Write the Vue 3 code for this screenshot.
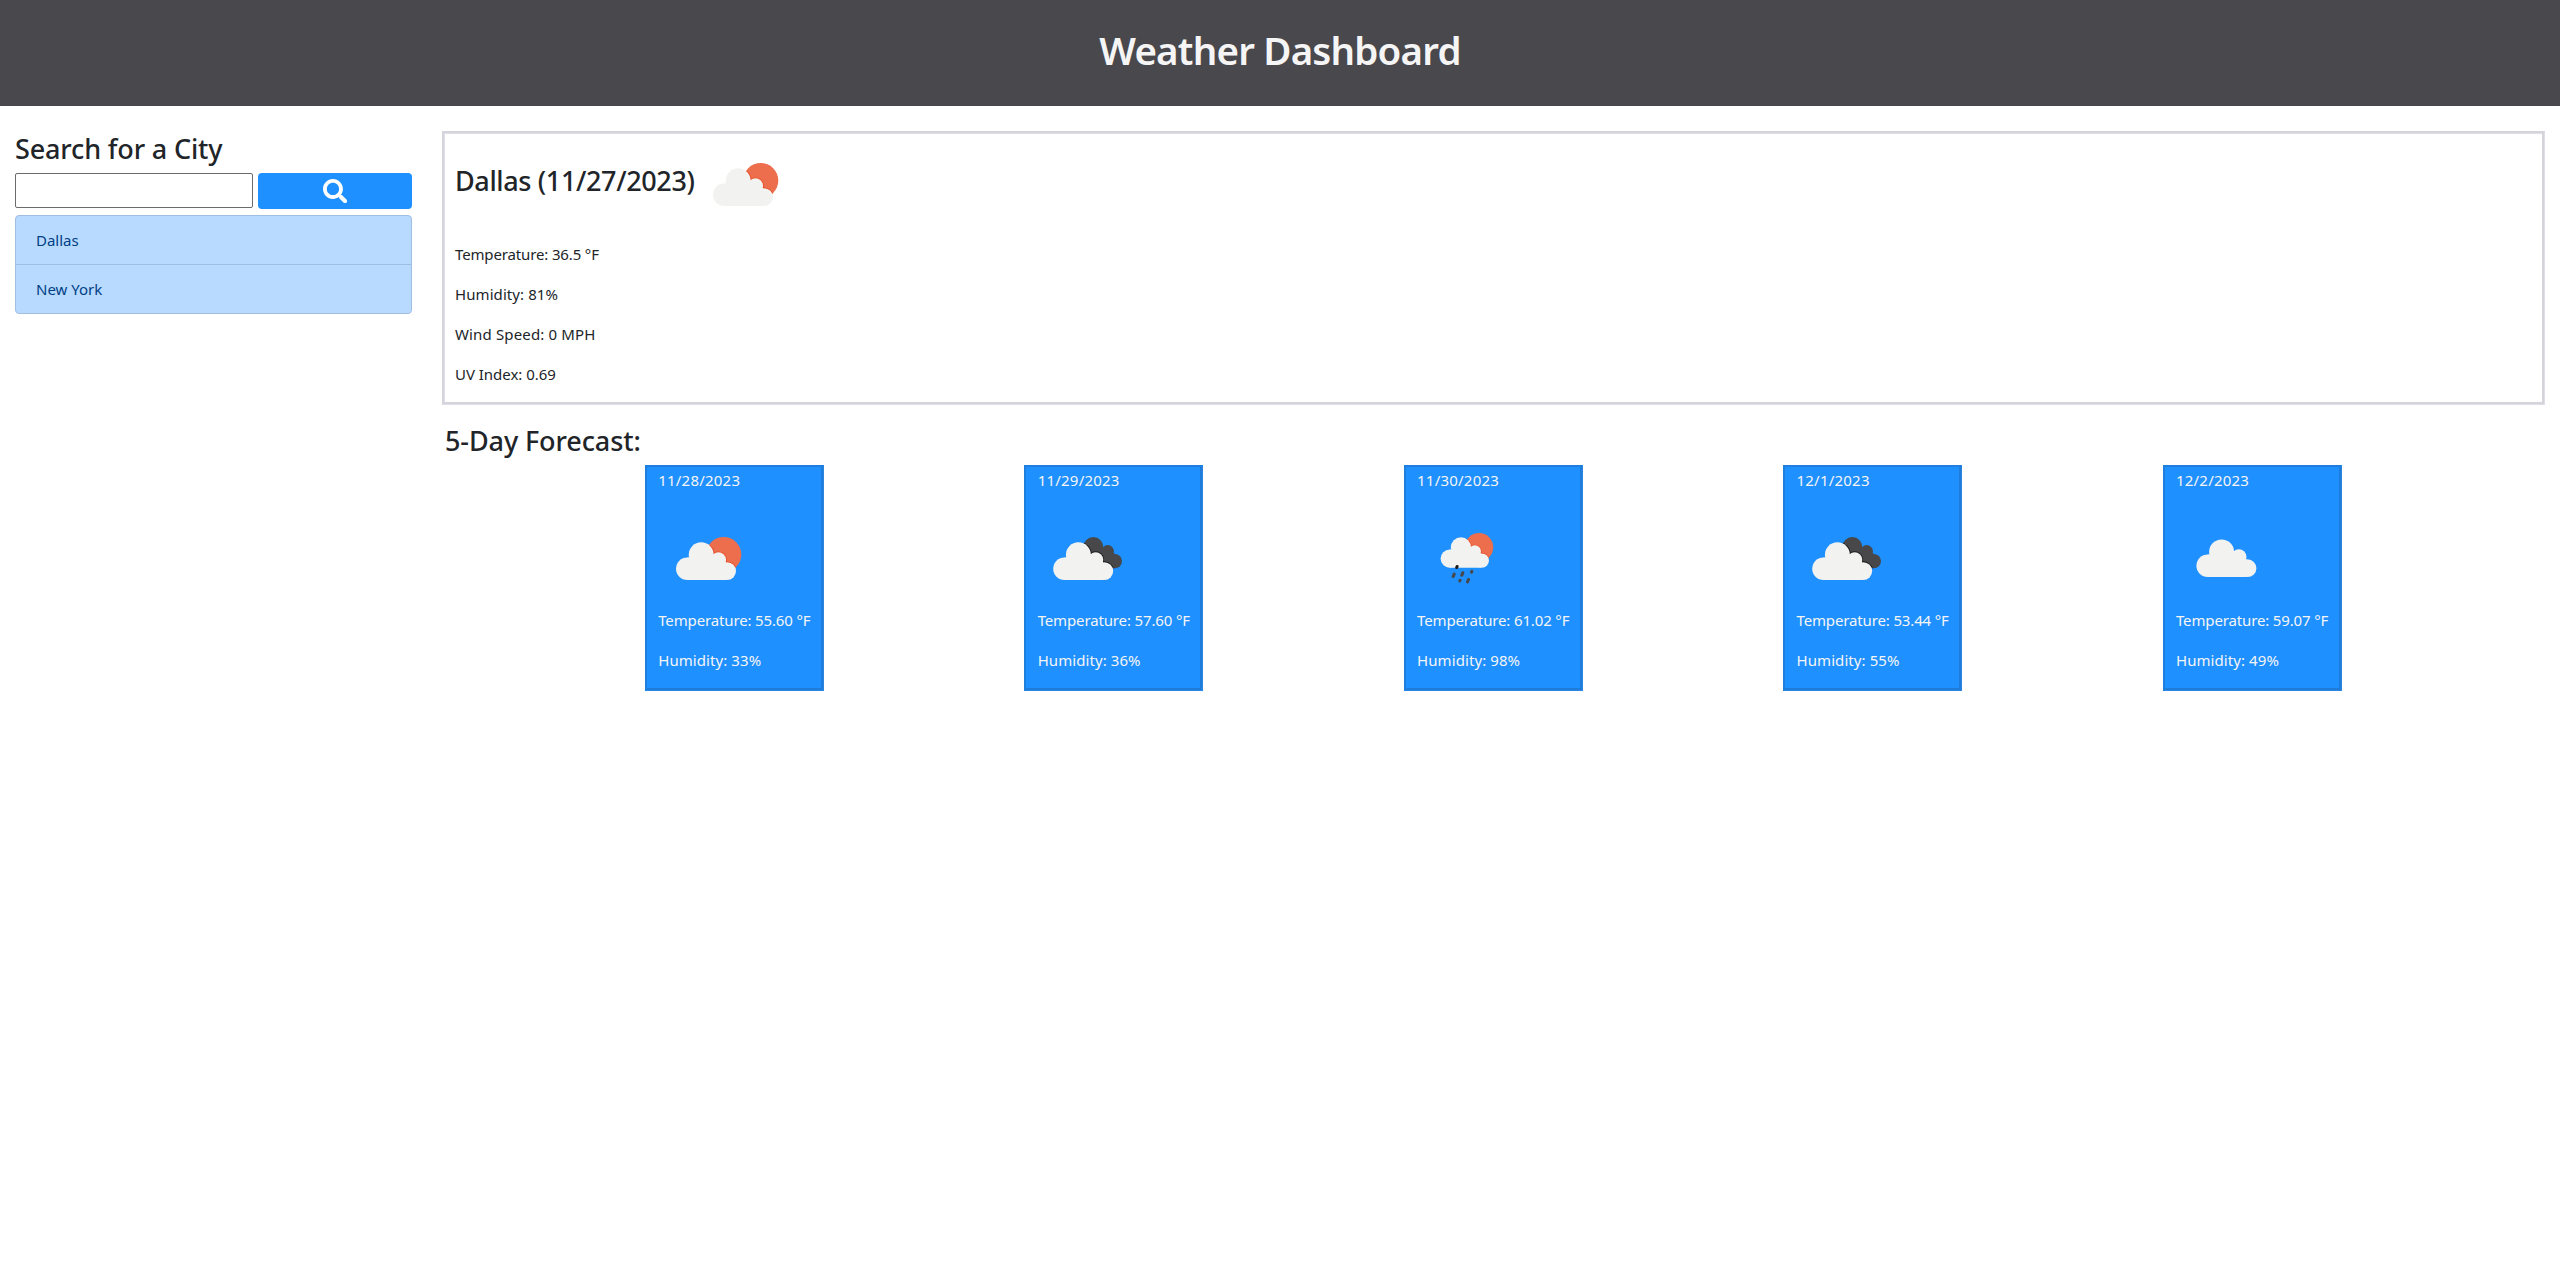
<script setup>
const cities = ['Dallas', 'New York']

const current = [
  { text: 'Temperature: 36.5 °F', kind: 'temp' },
  { text: 'Humidity: 81%', kind: 'humidity' },
  { text: 'Wind Speed: 0 MPH', kind: 'wind' },
  { text: 'UV Index: 0.69', kind: 'uv' }
]

const days = [
  { date: '11/28/2023', icon: 'few-clouds', temp: '55.60', humidity: 33 },
  { date: '11/29/2023', icon: 'broken-clouds', temp: '57.60', humidity: 36 },
  { date: '11/30/2023', icon: 'rain', temp: '61.02', humidity: 98 },
  { date: '12/1/2023', icon: 'broken-clouds', temp: '53.44', humidity: 55 },
  { date: '12/2/2023', icon: 'scattered-clouds', temp: '59.07', humidity: 49 }
]
</script>

<template>
  <div class="page">
    <svg class="sprite" width="0" height="0" aria-hidden="true">
      <defs>
        <g id="cloud-shape">
          <circle cx="29.3" cy="76.7" r="11.3" />
          <circle cx="43.2" cy="62.8" r="12.5" />
          <circle cx="60.5" cy="67.8" r="7.6" />
          <circle cx="69.1" cy="79.1" r="8.9" />
          <path d="M29.3 65.4H60L68.1 70.2V88H29.3z" />
        </g>
        <g id="dark-cloud">
          <circle cx="55.9" cy="55" r="10" />
          <circle cx="70.3" cy="59.4" r="6.3" />
          <circle cx="77.4" cy="69.1" r="7.2" />
          <path d="M52 56H70L77.4 62V76.3H60z" />
        </g>
        <clipPath id="sun-clip"><circle cx="65.7" cy="62.6" r="17.6" /></clipPath>
        <clipPath id="dark-clip">
          <circle cx="55.9" cy="55" r="10" />
          <circle cx="70.3" cy="59.4" r="6.3" />
          <circle cx="77.4" cy="69.1" r="7.2" />
          <path d="M52 56H70L77.4 62V76.3H60z" />
        </clipPath>
        <g id="few-clouds">
          <circle cx="65.7" cy="62.6" r="17.6" fill="#ec6e4c" />
          <g clip-path="url(#sun-clip)">
            <use href="#cloud-shape" fill="#e84b25" stroke="#e84b25" stroke-width="1.6" />
          </g>
          <use href="#cloud-shape" fill="#f2f2f0" />
        </g>
        <g id="broken-clouds" transform="translate(-.6 0)">
          <use href="#dark-cloud" fill="#48484a" />
          <g clip-path="url(#dark-clip)">
            <use href="#cloud-shape" x="-2.2" fill="#1c1c1e" stroke="#1c1c1e" stroke-width="1.8" />
          </g>
          <use href="#cloud-shape" x="-2.2" fill="#f2f2f0" />
        </g>
        <g id="scattered-clouds">
          <use href="#cloud-shape" x="2.4" y="-2.9" fill="#f2f2f0" />
        </g>
        <g id="rain">
          <use href="#few-clouds" transform="translate(9.1 4.8) scale(.806)" />
          <g stroke="#48484a" stroke-width="3.1" stroke-linecap="round">
            <path stroke="#1a1a1a" d="M40.1 74.5l-.4 1" />
            <path d="M37.2 82.1l-1 2.4M45.8 80.8l-1 2.4M54.9 79.3l-.4.8M43.1 88.3l-.3.6M51.5 87.5l-1 2.4" />
          </g>
        </g>
      </defs>
    </svg>

    <header class="banner"><h1>Weather Dashboard</h1></header>

    <div class="layout">
      <aside class="sidebar">
        <h2 class="search-title">Search for a City</h2>
        <div class="search">
          <input type="text" aria-label="City" />
          <button type="button" aria-label="Search">
            <svg viewBox="0 0 512 512" width="24.5" height="24.5">
              <path fill="#fff" d="M505 442.7L405.3 343c-4.5-4.5-10.6-7-17-7H372c27.6-35.3 44-79.7 44-128C416 93.1 322.9 0 208 0S0 93.1 0 208s93.1 208 208 208c48.3 0 92.7-16.4 128-44v16.3c0 6.4 2.5 12.5 7 17l99.7 99.7c9.4 9.4 24.6 9.4 33.9 0l28.3-28.3c9.4-9.4 9.4-24.6.1-34zM208 336c-70.7 0-128-57.2-128-128 0-70.7 57.2-128 128-128 70.7 0 128 57.2 128 128 0 70.7-57.2 128-128 128z" />
            </svg>
          </button>
        </div>
        <ul class="cities">
          <li v-for="city in cities" :key="city">{{ city }}</li>
        </ul>
      </aside>

      <main class="content">
        <section class="today">
          <div class="today-head">
            <h2>Dallas (11/27/2023)</h2>
            <svg class="weather-icon" viewBox="0 0 100 100"><use href="#few-clouds" /></svg>
          </div>
          <p v-for="row in current" :key="row.kind" :class="row.kind">{{ row.text }}</p>
        </section>

        <h2 class="forecast-title">5-Day Forecast:</h2>
        <section class="forecast">
          <div v-for="day in days" :key="day.date" class="column">
            <article class="card">
              <div class="date">{{ day.date }}</div>
              <svg class="weather-icon" viewBox="0 0 100 100"><use :href="'#' + day.icon" /></svg>
              <p class="temp">Temperature: {{ day.temp }} °F</p>
              <p class="humidity">Humidity: {{ day.humidity }}%</p>
            </article>
          </div>
        </section>
      </main>
    </div>
  </div>
</template>

<style>
body {
  margin: 0;
  background: #fff;
}
</style>

<style scoped>
.page {
  font: 400 15px/24px "Noto Sans", "Open Sans", sans-serif;
  color: #212529;
}
.page * {
  box-sizing: border-box;
}
.sprite {
  display: block;
}
h1,
h2,
p,
ul {
  margin: 0;
  padding: 0;
}
h2 {
  font-size: 27px;
  font-weight: 500;
  line-height: 33px;
  white-space: nowrap;
}
p {
  margin-bottom: 16px;
  white-space: nowrap;
}
.banner {
  height: 106px;
  padding-top: 26px;
  background: #49484d;
  text-align: center;
}
h1 {
  font-size: 38.5px;
  font-weight: 600;
  line-height: 48px;
  letter-spacing: -0.8px;
  color: #f5f5f5;
}
.layout {
  display: flex;
  gap: 30px;
  padding: 25px 15px 0;
}
.sidebar {
  flex: none;
  width: 397px;
  padding-top: 1px;
}
.search-title {
  letter-spacing: -0.15px;
}
.search {
  display: flex;
  justify-content: space-between;
  margin-top: 8px;
  height: 36px;
}
.search input {
  width: 238px;
  height: 35px;
  border: 1px solid #6b6b6b;
  border-radius: 2px;
  background: #fff;
}
.search button {
  display: flex;
  align-items: center;
  justify-content: center;
  width: 154px;
  height: 36px;
  padding: 0;
  border: 0;
  border-radius: 4px;
  background: #1e90ff;
}
.cities {
  margin-top: 6px;
  border: 1px solid #a0bfe0;
  border-radius: 4px;
  background: #b8daff;
  color: #004085;
  list-style: none;
  overflow: hidden;
}
.cities li {
  height: 48px;
  padding: 12px 20px;
}
.cities li + li {
  height: 49px;
  border-top: 1px solid #a0bfe0;
}
.content {
  flex: 1;
  min-width: 0;
}
.today {
  height: 274px;
  padding: 1px 10px 0 11px;
  border: solid #d5d4db;
  border-width: 2px 1px 1px 2px;
  border-right-color: #e0dfe9;
  border-bottom-color: #e0dfe9;
  box-shadow: inset -2px -2px #d5d4db, inset 1px 1px #e0dfe9;
}
.today-head {
  display: flex;
  height: 108px;
}
.today-head h2 {
  flex: none;
  width: 240px;
  padding-top: 30px;
  letter-spacing: -0.37px;
}
.today-head .weather-icon {
  margin-top: -16px;
}
.weather-icon {
  display: block;
  flex: none;
  width: 100px;
  height: 100px;
}
.temp {
  letter-spacing: -0.14px;
}
.humidity {
  letter-spacing: 0.08px;
}
.wind {
  letter-spacing: 0.15px;
}
.uv {
  letter-spacing: -0.03px;
}
.date {
  letter-spacing: 0.22px;
}
.forecast-title {
  margin-top: 19px;
  padding-left: 3px;
  letter-spacing: -0.1px;
}
.forecast {
  display: flex;
  margin: 8px 0 0 203px;
}
.column {
  flex: none;
  width: 379.45px;
}
.card {
  width: 178.8px;
  height: 226px;
  padding: 1px 0 0 11.2px;
  border: solid #1f7fde;
  border-width: 2px 1px 1px 2px;
  border-right-color: #2a86e2;
  border-bottom-color: #2a86e2;
  background: #1e90ff;
  box-shadow: inset -2px -2px #207cd9;
  color: #f5f5f5;
}
.card .temp {
  margin-top: 16px;
}
</style>
